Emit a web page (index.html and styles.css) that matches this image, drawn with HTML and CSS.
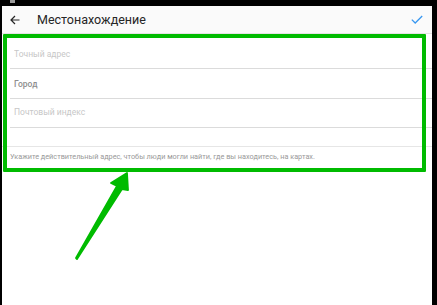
FILE: index.html
```html
<!DOCTYPE html>
<html lang="ru">
<head>
  <meta charset="UTF-8">
  <meta name="viewport" content="width=device-width, initial-scale=1">
  <title>Местонахождение</title>
  <link rel="stylesheet" href="styles.css">
</head>
<body>

  <div class="screen">
    <div class="statusbar"><span class="status-icon"></span></div>

    <div class="app">
      <header class="topbar">
        <svg class="back" width="10" height="10" viewBox="0 0 10 10">
          <path d="M9.5 5H1M5 1L1 5l4 4" fill="none" stroke="#262626" stroke-width="1.2"/>
        </svg>
        <h1 class="title">Местонахождение</h1>
        <svg class="done" width="12" height="9" viewBox="0 0 12 9">
          <path d="M0.8 4.6l3.4 3.4L11.2 1" fill="none" stroke="#3897f0" stroke-width="1.3"/>
        </svg>
      </header>

      <form class="fields">
        <div class="field"><input type="text" placeholder="Точный адрес"></div>
        <div class="field"><input type="text" class="filled" value="Город"></div>
        <div class="field"><input type="text" placeholder="Почтовый индекс"></div>
      </form>

      <p class="hint">Укажите действительный адрес, чтобы люди могли найти, где вы находитесь, на картах.</p>
    </div>

    <!-- выделение поверх формы -->
    <div class="highlight"></div>
    <svg class="pointer" width="62" height="100" viewBox="0 0 62 100">
      <path d="M7 94L52 24l6 1-1-17-16 10 6 3L6 93z" fill="#00bb00" stroke="#00bb00" stroke-width="1.8" stroke-linejoin="round"/>
    </svg>
  </div>

</body>
</html>
```

FILE: styles.css
```css
* {
  box-sizing: border-box;
}

body {
  margin: 0;
  font-family: Roboto, "Noto Sans", Arial, sans-serif;
  background: #fff;
}

.screen {
  position: relative;
  width: 437px;
  height: 305px;
  background: #000;
  display: flex;
  flex-direction: column;
  overflow: hidden;
}

.statusbar {
  height: 6px;
  padding-left: 10px;
}

.status-icon {
  display: block;
  width: 5px;
  height: 3px;
  background: #9a9a9a;
}

.app {
  flex: 1;
  margin: 0 5px 0 2px;
  background: #fff;
}

.topbar {
  height: 28px;
  display: flex;
  align-items: center;
  padding: 0 9px 0 8px;
  background: #fafafa;
  border-bottom: 1px solid #e4e4e4;
}

.back {
  margin-right: 17px;
}

.title {
  flex: 1;
  margin: 0;
  font-size: 12.5px;
  font-weight: 400;
  color: #262626;
}

.fields {
  margin: 0;
  padding: 5px 0 0 8px;
}

.field {
  height: 30px;
  border-bottom: 1px solid #dbdbdb;
  display: flex;
  align-items: center;
}

.field:last-child {
  height: 29px;
  padding-bottom: 3px;
}

.field input {
  width: 100%;
  border: none;
  outline: none;
  padding: 0 4px;
  font-family: inherit;
  font-size: 8.5px;
  color: #8e8e8e;
  background: transparent;
}

.field input::placeholder {
  color: #c7c7c7;
}

.field input.filled {
  font-weight: 500;
  color: #8e8e8e;
}

.hint {
  margin: 18px 0 0;
  padding: 5px 8px;
  border-top: 1px solid #e6e6e6;
  font-size: 7.3px;
  color: #999;
}

.highlight {
  position: absolute;
  left: 3px;
  top: 34px;
  width: 423px;
  height: 138px;
  border: 4px solid #00bb00;
  border-radius: 1px;
}

.pointer {
  position: absolute;
  left: 70px;
  top: 165px;
}
```
